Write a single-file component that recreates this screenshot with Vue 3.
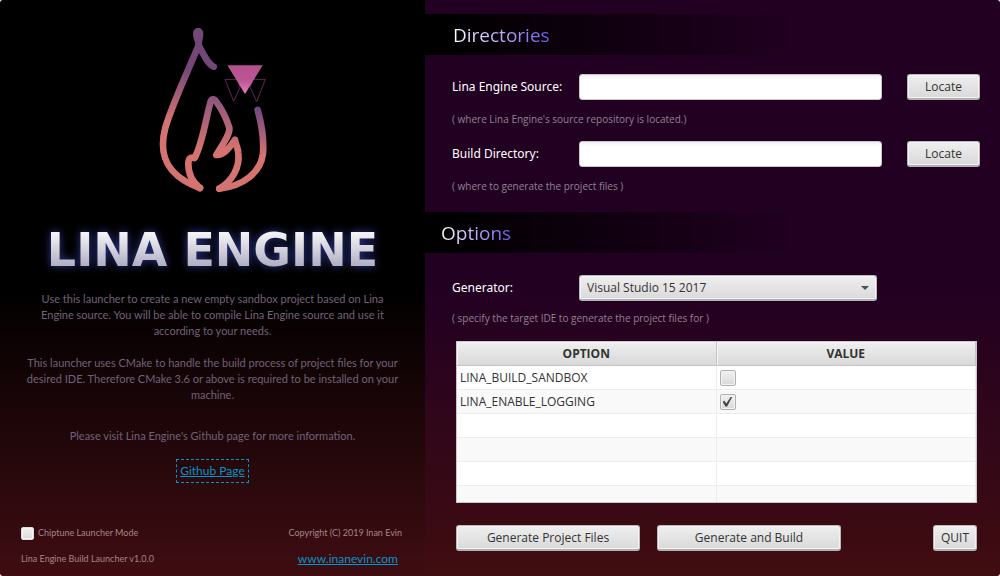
<script setup>
import { ref } from 'vue'

const source = ref('')
const buildDir = ref('')
const generator = ref('Visual Studio 15 2017')
const chiptune = ref(false)
const options = ref([
  { name: 'LINA_BUILD_SANDBOX', enabled: false },
  { name: 'LINA_ENABLE_LOGGING', enabled: true },
])
const emptyRows = 4
</script>

<template>
  <main class="launcher">
    <section class="about">
      <svg class="flame" viewBox="50 20 336 510" aria-hidden="true">
        <defs>
          <linearGradient id="outer" gradientUnits="userSpaceOnUse" x1="150" y1="150" x2="100" y2="310">
            <stop offset="0" stop-color="#754779" />
            <stop offset="1" stop-color="#d57370" />
          </linearGradient>
          <linearGradient id="inner" gradientUnits="userSpaceOnUse" x1="0" y1="235" x2="0" y2="390">
            <stop offset="0" stop-color="#8d5680" />
            <stop offset="1" stop-color="#d57370" />
          </linearGradient>
          <linearGradient id="side" gradientUnits="userSpaceOnUse" x1="0" y1="275" x2="0" y2="410">
            <stop offset="0" stop-color="#754a80" />
            <stop offset="1" stop-color="#d57370" />
          </linearGradient>
          <linearGradient id="gem" gradientUnits="userSpaceOnUse" x1="0" y1="138" x2="0" y2="224">
            <stop offset="0" stop-color="#b4508d" />
            <stop offset="0.55" stop-color="#ba5895" />
            <stop offset="1" stop-color="#f07ec0" />
          </linearGradient>
        </defs>
        <g fill="none" stroke-width="20" stroke-linecap="round" stroke-linejoin="round">
          <path stroke="url(#outer)" d="M220 142C203 135 188 103 175 78C145 150 99 246 75 325C56 397 69 466 179 506" />
          <path stroke="url(#side)" d="M352 272C366 322 371 360 368 402C361 460 309 500 237 508" />
          <path stroke="url(#inner)" d="M179 506C152 485 144 462 144 434C144 418 150 412 163 416C187 371 198 291 211 246C214 238 222 237 228 247C240 263 258 296 267 325C270 345 245 378 228 407C252 408 270 381 284 361C286 377 293 383 294 401C299 446 275 485 237 508" />
        </g>
        <path fill="#754779" d="M158 43C158 20 189 20 189 43C189 60 184 65 184 83L166 83C166 65 158 60 158 43Z" />
        <path fill="none" stroke="#5d2a50" stroke-width="3" d="M254 180H293L299 204L280 246ZM336 180H375L349 247L330 205Z" />
        <path fill="url(#gem)" d="M261 138H367L314 224Z" />
      </svg>
      <h1 class="wordmark">LINA ENGINE</h1>
      <p class="intro">
        Use this launcher to create a new empty sandbox project based on Lina<br />
        Engine source. You will be able to compile Lina Engine source and use it<br />
        according to your needs.
      </p>
      <p class="intro">
        This launcher uses CMake to handle the build process of project files for your<br />
        desired IDE. Therefore CMake 3.6 or above is required to be installed on your<br />
        machine.
      </p>
      <p class="intro visit">Please visit Lina Engine's Github page for more information.</p>
      <a class="link focused" href="#github">Github Page</a>
      <footer class="footer">
        <div class="line">
          <label class="mode"><input v-model="chiptune" class="check small" type="checkbox" />Chiptune Launcher Mode</label>
          <span>Copyright (C) 2019 Inan Evin</span>
        </div>
        <div class="line">
          <span>Lina Engine Build Launcher v1.0.0</span>
          <a class="link site" href="#site">www.inanevin.com</a>
        </div>
      </footer>
    </section>

    <section class="setup">
      <h2 class="band"><span>Directories</span></h2>
      <div class="row first">
        <label for="source">Lina Engine Source:</label>
        <input id="source" v-model="source" class="field" type="text" />
        <button class="btn" type="button">Locate</button>
      </div>
      <p class="hint">( where Lina Engine's source repository is located.)</p>
      <div class="row">
        <label for="build">Build Directory:</label>
        <input id="build" v-model="buildDir" class="field" type="text" />
        <button class="btn" type="button">Locate</button>
      </div>
      <p class="hint">( where to generate the project files )</p>

      <h2 class="band options"><span>Options</span></h2>
      <div class="row generator">
        <label for="generator">Generator:</label>
        <div class="picker">
          <select id="generator" v-model="generator" class="btn">
            <option>Visual Studio 15 2017</option>
          </select>
        </div>
      </div>
      <p class="hint">( specify the target IDE to generate the project files for )</p>

      <table class="table">
        <thead>
          <tr><th>OPTION</th><th>VALUE</th></tr>
        </thead>
        <tbody>
          <tr v-for="o in options" :key="o.name">
            <td><label :for="o.name">{{ o.name }}</label></td>
            <td><input :id="o.name" v-model="o.enabled" class="check" type="checkbox" /></td>
          </tr>
          <tr v-for="n in emptyRows" :key="n"><td></td><td></td></tr>
        </tbody>
      </table>

      <div class="actions">
        <button class="btn wide" type="button">Generate Project Files</button>
        <button class="btn wide" type="button">Generate and Build</button>
        <button class="btn quit" type="button">QUIT</button>
      </div>
    </section>
  </main>
</template>

<style>
body {
  margin: 0;
  background: #fff;
}
</style>

<style scoped>
* {
  box-sizing: border-box;
}
.launcher {
  display: grid;
  grid-template-columns: 42.5% 1fr;
  min-height: 100vh;
  border-radius: 3px;
  overflow: hidden;
  font: 12px/16px "Open Sans", "Noto Sans", sans-serif;
  color: #fff;
}
h1,
h2,
p {
  margin: 0;
  font-weight: 400;
}
.about {
  display: flex;
  flex-direction: column;
  align-items: center;
  padding: 26px 20px 4px;
  background: linear-gradient(#000 50%, #3f0d12);
  font-family: Lato, "Open Sans", sans-serif;
}
.flame {
  width: 112px;
  height: 170px;
}
.wordmark {
  margin: 26px 0 13px;
  font: bold 46px/56px "DejaVu Sans", sans-serif;
  white-space: nowrap;
  color: transparent;
  background: linear-gradient(#f4f4f6 20%, #a9a7bd 85%);
  background-clip: text;
  filter: drop-shadow(0 0 4px #2c3890);
}
.intro {
  margin-bottom: 16px;
  font-size: 11px;
  text-align: center;
  white-space: nowrap;
  color: #73607b;
}
.visit {
  margin: 9px 0 15px;
}
.link {
  color: #0096c9;
  text-decoration: underline;
}
.focused {
  padding: 3px;
  border: 1px dashed #0096c9;
}
.footer {
  width: 100%;
  margin-top: auto;
  font-size: 9px;
  color: #a58489;
}
.line {
  display: flex;
  align-items: center;
  justify-content: space-between;
  height: 26px;
  padding: 0 3px 0 1px;
}
.mode {
  display: flex;
  align-items: center;
  gap: 4px;
}
.site {
  padding-right: 4px;
  font-size: 12px;
}
.check {
  display: grid;
  place-items: center;
  appearance: none;
  width: 16px;
  height: 16px;
  margin: 0;
  border: 1px solid #b0b0b0;
  border-radius: 2px;
  background: linear-gradient(#f0f0f0, #dadada);
  box-shadow: inset 0 0 0 1px #f4f4f4;
}
.check:checked::after {
  content: "";
  width: 10px;
  height: 10px;
  background: #444;
  clip-path: polygon(0 50%, 18% 42%, 38% 70%, 85% 0, 100% 0, 46% 100%, 30% 100%);
}
.small {
  width: 13px;
  height: 13px;
  border-color: #ddd;
}
.setup {
  padding-top: 14px;
  background: linear-gradient(#220022 50%, #400d10);
}
.band {
  height: 41px;
  padding-left: 28px;
  font-size: 19px;
  line-height: 42px;
  background: linear-gradient(90deg, #000 3%, #22002200 66%);
}
.band span {
  color: transparent;
  background: linear-gradient(90deg, #fff, #7158f0);
  background-clip: text;
}
.options {
  margin-top: 18px;
  padding-left: 16px;
}
.row {
  display: grid;
  grid-template-columns: 127px 1fr 73px;
  align-items: center;
  height: 26px;
  margin: 14px 20px 0 27px;
}
.row > label {
  font-family: "Noto Sans", sans-serif;
}
.first {
  margin-top: 19px;
}
.generator {
  grid-template-columns: 127px 1fr;
  margin: 22px 123px 0 27px;
}
.field {
  width: calc(100% - 25px);
  height: 26px;
  padding: 4px 7px;
  border: 1px solid #c8c8c8;
  border-radius: 3px;
  background: linear-gradient(#f2f2f2, #fff 5px);
  font: inherit;
  color: #333;
}
.btn {
  height: 26px;
  padding: 0 7px;
  border: 1px solid #bababa;
  border-bottom: 2px solid #b0b0b0;
  border-radius: 3px;
  background: linear-gradient(#efefef, #d9d9d9);
  box-shadow: inset 0 0 0 1px #f3f3f3;
  font: inherit;
  color: #333;
}
.picker {
  position: relative;
}
.picker .btn {
  display: block;
  appearance: none;
  width: 100%;
}
.picker::after {
  content: "";
  position: absolute;
  top: 11px;
  right: 8px;
  border: 4px solid transparent;
  border-top-color: #505050;
  border-bottom: 0;
  pointer-events: none;
}
.hint {
  margin: 11px 0 0 27px;
  font-size: 10px;
  line-height: 16px;
  color: #948092;
}
.generator + .hint {
  margin-top: 9px;
}
.table {
  width: calc(100% - 54px);
  margin: 15px 23px 0 31px;
  table-layout: fixed;
  border: 1px solid #c8c8c8;
  border-spacing: 0;
  background: #fff;
  color: #333;
}
.table th {
  height: 24px;
  padding: 0;
  border-right: 1px solid #c4c4c4;
  border-bottom: 1px solid #c4c4c4;
  background: linear-gradient(#efefef, #d9d9d9);
  box-shadow: inset 1px 1px 0 #f6f6f6;
  font-weight: 700;
}
.table td {
  height: 24px;
  padding: 0 3px;
  border-right: 1px solid #ededed;
  border-bottom: 1px solid #ededed;
}
.table tbody tr:nth-child(even) {
  background: #f9f9f9;
}
.table tbody tr:last-child td {
  height: 16px;
  border-bottom: 0;
}
.actions {
  display: flex;
  gap: 17px;
  margin: 22px 23px 24px 31px;
}
.wide {
  flex: 0 1 184px;
}
.quit {
  margin-left: auto;
}
</style>
